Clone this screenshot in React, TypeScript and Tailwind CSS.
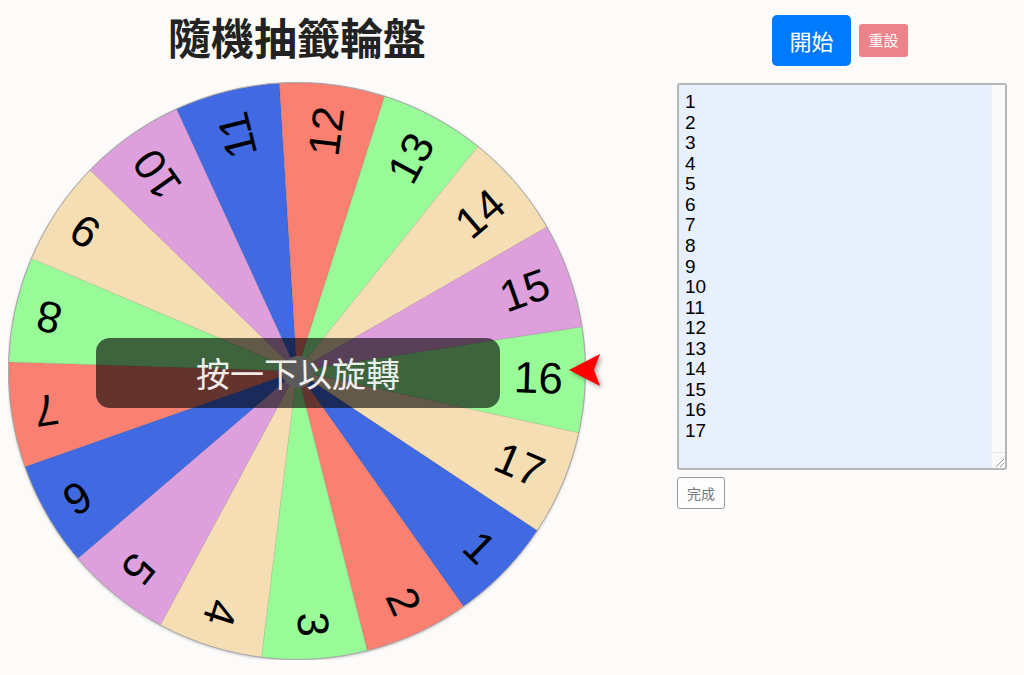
import React from "react";

const COLORS: Record<number, string> = {
  1: "#4169E1",
  2: "#FA8072",
  3: "#98FB98",
  4: "#F5DEB3",
  5: "#DDA0DD",
  6: "#4169E1",
  7: "#FA8072",
  8: "#98FB98",
  9: "#F5DEB3",
  10: "#DDA0DD",
  11: "#4169E1",
  12: "#FA8072",
  13: "#98FB98",
  14: "#F5DEB3",
  15: "#DDA0DD",
  16: "#98FB98",
  17: "#F5DEB3",
};

const N = 17;
const SEG = 360 / N;
const OFFSET = 1.8;
const C = 289;
const R = 288.5;

function pt(angDeg: number, r: number) {
  const a = (angDeg * Math.PI) / 180;
  return [C + r * Math.cos(a), C + r * Math.sin(a)];
}

function Wheel() {
  const items = Array.from({ length: N }, (_, k) => k + 1);
  return (
    <svg width={578} height={578} viewBox="0 0 578 578" className="block">
      <defs>
        <filter id="wshadow" x="-5%" y="-5%" width="110%" height="110%">
          <feDropShadow dx="0" dy="1" stdDeviation="1.5" floodColor="#000" floodOpacity="0.25" />
        </filter>
      </defs>
      <circle cx={C} cy={C} r={R} fill="#ccc" filter="url(#wshadow)" />
      {items.map((i) => {
        const mid = OFFSET + (i - 16) * SEG;
        const a1 = mid - SEG / 2;
        const a2 = mid + SEG / 2;
        const [x1, y1] = pt(a1, R);
        const [x2, y2] = pt(a2, R);
        return (
          <path
            key={"s" + i}
            d={`M ${C} ${C} L ${x1} ${y1} A ${R} ${R} 0 0 1 ${x2} ${y2} Z`}
            fill={COLORS[i]}
            stroke="rgba(0,0,0,0.12)"
            strokeWidth={0.6}
          />
        );
      })}
      <circle cx={C} cy={C} r={R} fill="none" stroke="#a8a8a8" strokeWidth={1} />
      {items.map((i) => {
        const mid = OFFSET + (i - 16) * SEG;
        return (
          <text
            key={"t" + i}
            transform={`rotate(${mid} ${C} ${C})`}
            x={C + 266}
            y={C - 1}
            textAnchor="end"
            dominantBaseline="central"
            fontSize={44}
            fontFamily="'Liberation Sans', Arial, sans-serif"
            fill="#000"
          >
            {i}
          </text>
        );
      })}
      <circle cx={C + 1} cy={C + 1} r={16} fill="#e2e2e2" />
    </svg>
  );
}

export default function App() {
  const text = Array.from({ length: 17 }, (_, k) => String(k + 1)).join("\n");
  return (
    <div className="min-h-screen w-full bg-[#fcfbfa] flex">
      <div className="w-[594px] flex flex-col items-center">
        <h1 className="mt-[12px] text-[43px] leading-[48px] font-bold text-[#222] [font-family:'Noto_Sans_CJK_TC','Noto_Sans_CJK_SC',sans-serif]">
          隨機抽籤輪盤
        </h1>
        <div className="relative mt-[22px] w-[578px] h-[578px]">
          <Wheel />
          <div className="absolute left-[88px] top-[256px] w-[404px] h-[70px] rounded-[14px] bg-black/60 flex items-center justify-center">
            <span className="text-[34px] leading-none text-white/90 [font-family:'Noto_Sans_CJK_TC','Noto_Sans_CJK_SC',sans-serif] font-normal">
              按一下以旋轉
            </span>
          </div>
          <svg
            className="absolute left-[556px] top-[262px]"
            width={44}
            height={44}
            viewBox="0 0 44 44"
            style={{ filter: "drop-shadow(2px 2px 2px rgba(0,0,0,0.35))" }}
          >
            <polygon points="5,26 36,10 30,26 36,42" fill="#ff0000" />
          </svg>
        </div>
      </div>
      <div className="ml-[83px] w-[330px] flex flex-col">
        <div className="mt-[15px] flex items-center justify-center gap-[8px] mr-[4px]">
          <button className="w-[79px] h-[51px] rounded-[5px] bg-[#007bff] text-white text-[22px] [font-family:'Noto_Sans_CJK_TC','Noto_Sans_CJK_SC',sans-serif]">
            開始
          </button>
          <button className="w-[49px] h-[33px] rounded-[3px] bg-[#ec838b] text-white text-[15px] [font-family:'Noto_Sans_CJK_TC','Noto_Sans_CJK_SC',sans-serif]">
            重設
          </button>
        </div>
        <div className="mt-[17px] w-[330px] h-[387px] border-2 border-[#b6b6b6] rounded-[3px] bg-[#e8f0fe] flex overflow-hidden">
          <textarea
            defaultValue={text}
            spellCheck={false}
            className="flex-1 bg-transparent resize-none outline-none overflow-hidden pt-[7px] pl-[6px] text-[19px] leading-[20.56px] text-black [font-family:'Liberation_Sans',Arial,sans-serif]"
          />
          <div className="w-[14px] bg-[#fafafa] border-l border-[#ececec] flex flex-col justify-end">
            <div className="h-[16px] border-t border-[#e4e4e4] flex items-end justify-end">
              <svg width={10} height={10} viewBox="0 0 10 10" className="mb-[1px] mr-[1px]">
                <line x1="2" y1="10" x2="10" y2="2" stroke="#9a9a9a" strokeWidth="1" />
                <line x1="6" y1="10" x2="10" y2="6" stroke="#9a9a9a" strokeWidth="1" />
              </svg>
            </div>
          </div>
        </div>
        <div className="mt-[7px]">
          <button className="w-[48px] h-[32px] rounded-[3px] border border-[#9a9a9a] bg-[#fdfdfd] text-[#777] text-[14px] [font-family:'Noto_Sans_CJK_TC','Noto_Sans_CJK_SC',sans-serif]">
            完成
          </button>
        </div>
      </div>
    </div>
  );
}
